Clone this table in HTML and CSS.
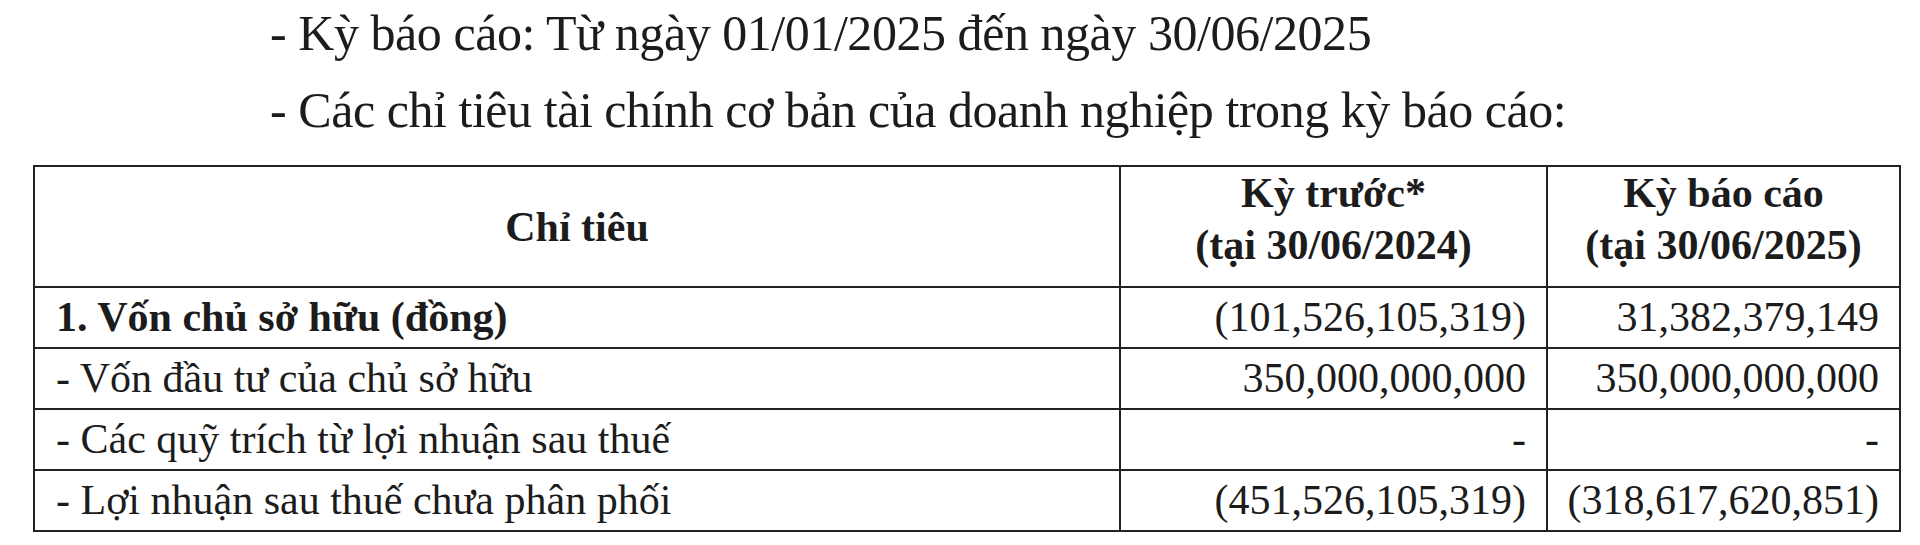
FILE: index.html
```html
<!DOCTYPE html>
<html lang="vi">
<head>
<meta charset="utf-8">
<title>Kỳ báo cáo</title>
<link rel="stylesheet" href="styles.css">
</head>
<body>
<div class="page">
  <div class="intro">
    <p class="line">- Kỳ báo cáo: Từ ngày 01/01/2025 đến ngày 30/06/2025</p>
    <p class="line">- Các chỉ tiêu tài chính cơ bản của doanh nghiệp trong kỳ báo cáo:</p>
  </div>
  <table class="fin">
    <colgroup>
      <col class="c1"><col class="c2"><col class="c3">
    </colgroup>
    <thead>
      <tr class="head">
        <th class="name">Chỉ tiêu</th>
        <th class="period">Kỳ trước*<br>(tại 30/06/2024)</th>
        <th class="period">Kỳ báo cáo<br>(tại 30/06/2025)</th>
      </tr>
    </thead>
    <tbody>
      <tr class="bold">
        <td class="label">1. Vốn chủ sở hữu (đồng)</td>
        <td class="num">(101,526,105,319)</td>
        <td class="num">31,382,379,149</td>
      </tr>
      <tr>
        <td class="label">- Vốn đầu tư của chủ sở hữu</td>
        <td class="num">350,000,000,000</td>
        <td class="num">350,000,000,000</td>
      </tr>
      <tr>
        <td class="label">- Các quỹ trích từ lợi nhuận sau thuế</td>
        <td class="num">-</td>
        <td class="num">-</td>
      </tr>
      <tr>
        <td class="label">- Lợi nhuận sau thuế chưa phân phối</td>
        <td class="num">(451,526,105,319)</td>
        <td class="num">(318,617,620,851)</td>
      </tr>
    </tbody>
  </table>
</div>
</body>
</html>
```
FILE: styles.css
```css
html, body {
  margin: 0;
  padding: 0;
  background: #ffffff;
}
body {
  font-family: "Liberation Serif", "Times New Roman", serif;
  color: #1c1c1c;
}
.intro {
  display: flex;
  flex-direction: column;
  gap: 11px;
}
.line {
  margin: 0;
  padding-left: 270px;
  font-size: 50px;
  letter-spacing: -0.45px;
  line-height: 66px;
  height: 66px;
}
.fin {
  margin-top: 22px;
  margin-left: 33px;
  width: 1866px;
  border-collapse: collapse;
  table-layout: fixed;
  border: 2px solid #222;
}
.c1 { width: 1086px; }
.c2 { width: 427px; }
.c3 { width: 353px; }
.fin th, .fin td {
  border: 2px solid #222;
  font-size: 42px;
  padding: 0;
}
.fin th {
  font-weight: bold;
  text-align: center;
  line-height: 52px;
  height: 119px;
}
.fin th.period {
  vertical-align: top;
}
.fin td {
  height: 59px;
  line-height: 59px;
}
.bold .label {
  font-weight: bold;
}
.label {
  padding-left: 21px !important;
  text-align: left;
}
.num {
  text-align: right;
  padding-right: 20px !important;
}
```
